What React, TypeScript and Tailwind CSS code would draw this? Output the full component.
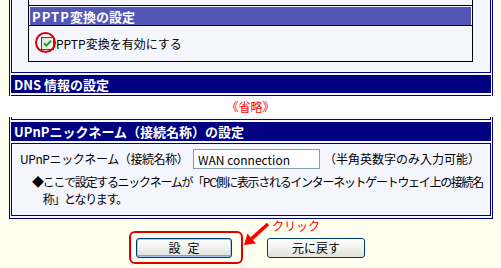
import React from "react";

// ナビ系の色
const NAVY = "border-[#000080]";

function HeaderBar({ label, className = "" }: { label: string; className?: string }) {
  return (
    <div className={`bg-[#000080] text-white font-bold text-[13px] leading-none flex items-center pl-[3px] ${className}`}>
      {label}
    </div>
  );
}

function CheckMark() {
  return (
    <svg width="13" height="13" viewBox="0 0 13 13" className="block">
      <defs>
        <linearGradient id="cbg" x1="0" y1="0" x2="1" y2="1">
          <stop offset="0" stopColor="#dcdcd7" />
          <stop offset="1" stopColor="#ffffff" />
        </linearGradient>
      </defs>
      <rect x="0.5" y="0.5" width="12" height="12" fill="url(#cbg)" stroke="#1c5180" />
      <path d="M3 6.2 L5.3 8.6 L10 3.8" fill="none" stroke="#21a121" strokeWidth="2" />
    </svg>
  );
}

export default function App() {
  return (
    <div className="w-[501px] h-[268px] bg-[#fffff0] overflow-hidden relative font-['Noto_Sans_CJK_JP',sans-serif] text-black">
      {/* 上のブロック：PPTP変換 / DNS情報 */}
      <div className={`ml-[9px] w-[484px] h-[96px] border-x ${NAVY} px-px flex flex-col gap-[2px] bg-[#f5f5fd]`}>
        <div className={`h-[73px] shrink-0 border-x border-b ${NAVY} pl-[16px]`}>
          <div className="w-[445px] border-x border-b border-black">
            <div className="h-[6px] border-b border-black" />
            <div className="px-px pt-px border-b border-black">
              <div className="h-[18px] bg-[#5256b5] text-white font-bold text-[13px] leading-none flex items-center pl-[2px]">
                <span className="tracking-[1px]">PPTP</span>変換の設定
              </div>
            </div>
            <div className="h-[35px] flex items-center pl-[12px] text-[12px] relative">
              <CheckMark />
              <span className="ml-[2px]">PPTP変換を有効にする</span>
              {/* 赤丸の注記 */}
              <div className="absolute left-[6px] top-[6px] w-[21px] h-[21px] rounded-full border-2 border-[#e00000]" />
            </div>
          </div>
        </div>
        <HeaderBar label="DNS 情報の設定" className="h-[18px] shrink-0" />
        <div className={`flex-1 border-x border-t ${NAVY}`} />
      </div>

      {/* 省略帯 */}
      <div className="h-[21px] bg-white flex items-center justify-center text-[12px] text-[#ff0000] leading-none">
        《省略》
      </div>

      {/* 下のブロック：UPnPニックネーム */}
      <div className={`ml-[9px] w-[484px] h-[102px] border-x border-b ${NAVY} px-px pb-[2px] flex flex-col gap-[2px] bg-[#f5f5fd]`}>
        <div className={`h-[3px] shrink-0 border-x border-b ${NAVY}`} />
        <HeaderBar label="UPnPニックネーム（接続名称）の設定" className="h-[19px] shrink-0" />
        <div className={`flex-1 border ${NAVY} pl-[8px] text-[12px]`}>
          <div className="mt-[5px] h-[20px] flex items-center">
            <span className="w-[173px] shrink-0 whitespace-nowrap tracking-[-0.4px]">UPnPニックネーム（接続名称）</span>
            <input
              readOnly
              value="WAN connection"
              className="w-[127px] h-[20px] border border-[#7f9db9] bg-white px-[4px] text-[12px] outline-none"
            />
            <span className="ml-[4px] whitespace-nowrap">（半角英数字のみ入力可能）</span>
          </div>
          <div className="mt-[4px] ml-[12px] flex leading-[17px] whitespace-nowrap tracking-[-1.3px]">
            <span>◆</span>
            <span>
              ここで設定するニックネームが「PC側に表示されるインターネットゲートウェイ上の接続名
              <br />
              称」となります。
            </span>
          </div>
        </div>
      </div>

      {/* ボタン */}
      <div className="relative h-[49px]">
        <div className="pt-[19px] flex justify-center gap-[35px] text-[12px]">
          <button className="w-[96px] h-[20px] rounded-[3px] border border-[#003c74] bg-gradient-to-b from-[#ffffff] to-[#e3e3db] shadow-[inset_0_0_0_1px_#a8c4ef,inset_0_-1px_0_1px_#7da2ce] leading-none">
            <span className="mr-[7px]">設</span>定
          </button>
          <button className="w-[98px] h-[20px] rounded-[3px] border border-[#003c74] bg-gradient-to-b from-[#ffffff] to-[#e3e3db] leading-none">
            元に戻す
          </button>
        </div>
        {/* 注記：赤枠・矢印・クリック */}
        <div className="absolute left-[129px] top-[12px] w-[114px] h-[33px] rounded-[6px] border-2 border-[#e00000]" />
        <span className="absolute left-[272px] top-[0px] text-[12px] leading-[14px] text-[#ff0000]">クリック</span>
        <svg className="absolute left-[240px] top-[2px]" width="34" height="30" viewBox="240 221 34 30">
          <line x1="268" y1="224" x2="251.7" y2="238.6" stroke="#ff0000" strokeWidth="3.5" />
          <polygon points="244,245 256,243.5 247.5,233.5" fill="#ff0000" />
        </svg>
      </div>
    </div>
  );
}
